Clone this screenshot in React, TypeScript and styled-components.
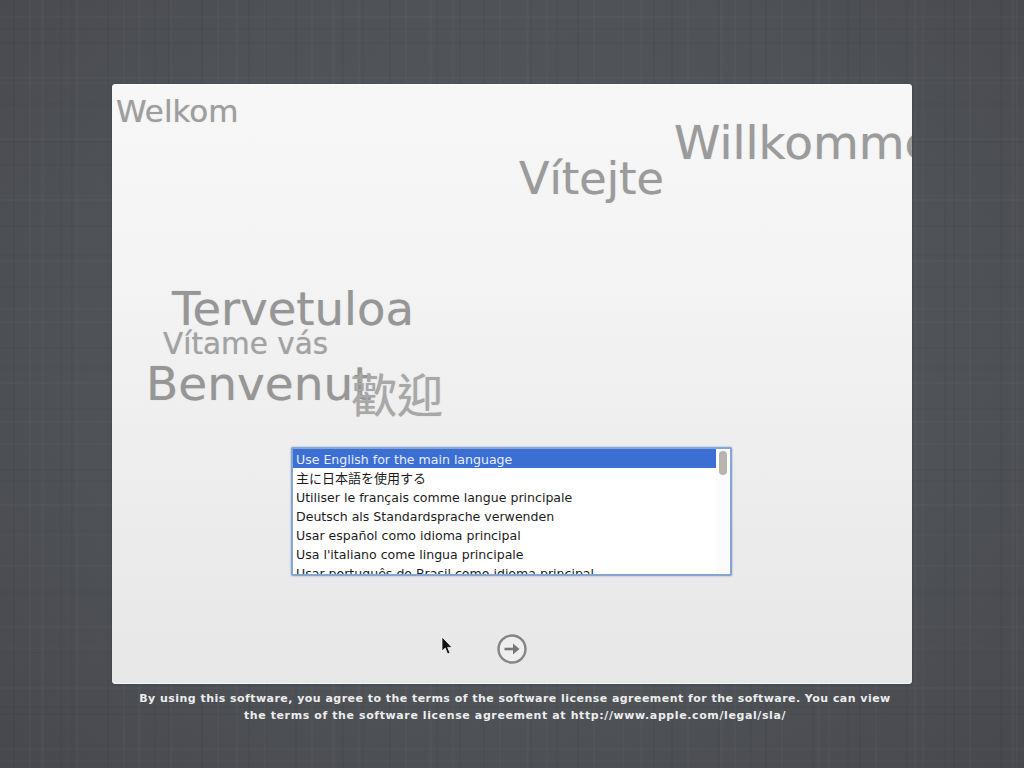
import React from "react";
import styled, { createGlobalStyle } from "styled-components";

const Global = createGlobalStyle`
  html, body { margin: 0; padding: 0; }
  body { background: #4d5054; font-family: "DejaVu Sans", "Noto Sans CJK TC", sans-serif; }
`;

const Desktop = styled.div`
  width: 1024px;
  height: 768px;
  overflow: hidden;
  box-sizing: border-box;
  padding-top: 84px;
  display: flex;
  flex-direction: column;
  align-items: center;
  background-color: #4f5256;
  background-image:
    linear-gradient(90deg, transparent 0 13px, rgba(0,0,0,0.035) 13px 15px, transparent 15px 29px, rgba(255,255,255,0.02) 29px 31px, transparent 31px),
    linear-gradient(90deg, transparent 0 41px, rgba(255,255,255,0.018) 41px 44px, transparent 44px 71px, rgba(0,0,0,0.03) 71px 73px, transparent 73px),
    linear-gradient(0deg, transparent 0 17px, rgba(0,0,0,0.025) 17px 19px, transparent 19px 43px, rgba(255,255,255,0.015) 43px 45px, transparent 45px),
    linear-gradient(0deg, transparent 0 29px, rgba(255,255,255,0.012) 29px 31px, transparent 31px 83px, rgba(0,0,0,0.025) 83px 85px, transparent 85px),
    radial-gradient(ellipse at 50% 45%, #54575b 0%, #4f5256 60%, #47484d 100%);
  background-size: 47px 100%, 97px 100%, 100% 61px, 100% 113px, 100% 100%;
`;

const Panel = styled.main`
  position: relative;
  width: 800px;
  height: 600px;
  flex: none;
  box-sizing: border-box;
  padding-top: 363px;
  border-radius: 4px;
  overflow: hidden;
  display: flex;
  flex-direction: column;
  align-items: center;
  background: linear-gradient(180deg, #f7f7f7 0%, #f4f4f4 30%, #eeeeee 60%, #e7e7e7 100%);
  box-shadow: 0 0 2px rgba(0, 0, 0, 0.3), inset 0 -1px 0 #f6f6f6, inset 0 1px 0 #ffffff;
`;

const Word = styled.span<{ $x: number; $y: number; $size: number; $tone?: string }>`
  position: absolute;
  left: ${(p) => p.$x}px;
  top: ${(p) => p.$y}px;
  font-size: ${(p) => p.$size}px;
  line-height: 1;
  white-space: nowrap;
  color: ${(p) => p.$tone ?? "#9a9a9a"};
  text-shadow: 0 0 1px rgba(150, 150, 150, 0.55);
`;

const ListBox = styled.div`
  position: relative;
  margin-left: -1px;
  width: 437px;
  height: 125px;
  flex: none;
  box-sizing: content-box;
  border: 2px solid #85a6d0;
  border-radius: 2px;
  background: #fff;
  overflow: hidden;
  display: flex;
  box-shadow: 0 0 2px rgba(70, 110, 170, 0.6);
`;

const Rows = styled.ul`
  flex: 1;
  margin: 0;
  padding: 0;
  list-style: none;
  min-width: 0;
`;

const Row = styled.li<{ $selected?: boolean; $cjk?: boolean }>`
  height: 19px;
  line-height: 21px;
  padding-left: 3px;
  font-size: ${(p) => (p.$cjk ? "13px" : "12.55px")};
  white-space: nowrap;
  color: ${(p) => (p.$selected ? "#e6edff" : "#1c1c1c")};
  background: ${(p) => (p.$selected ? "#3c6fd3" : "transparent")};
`;

const Track = styled.div`
  width: 14px;
  flex: none;
  background: #fbfbfb;
  box-sizing: border-box;
  padding: 2px 3px 0 3px;
`;

const Thumb = styled.div`
  width: 8px;
  height: 24px;
  border-radius: 4px;
  background: #b7b5ae;
`;

const NextRow = styled.div`
  margin-top: 58px;
  display: flex;
  justify-content: center;
  width: 100%;
`;

const NextButton = styled.button`
  width: 30px;
  height: 30px;
  padding: 0;
  border: none;
  background: none;
  display: block;
`;

const Pointer = styled.svg`
  position: absolute;
  left: 329px;
  top: 552px;
`;

const Legal = styled.p`
  margin: 6px 0 0;
  padding-left: 6px;
  width: 800px;
  box-sizing: border-box;
  text-align: center;
  font-size: 11px;
  line-height: 17px;
  font-weight: 700;
  color: #eceded;
`;

const LegalLine = styled.span<{ $spacing: number }>`
  display: block;
  letter-spacing: ${(p) => p.$spacing}px;
`;

const languages = [
  "Use English for the main language",
  "主に日本語を使用する",
  "Utiliser le français comme langue principale",
  "Deutsch als Standardsprache verwenden",
  "Usar español como idioma principal",
  "Usa l'italiano come lingua principale",
  "Usar português do Brasil como idioma principal",
];

export default function App() {
  return (
    <Desktop>
      <Global />
      <Panel>
        <Word $x={4} $y={12} $size={31} $tone="#9e9e9e">Welkom</Word>
        <Word $x={407} $y={73} $size={44.5} $tone="#9b9b9b">Vítejte</Word>
        <Word $x={562} $y={35} $size={47} $tone="#9b9b9b">Willkommen</Word>
        <Word $x={60} $y={202} $size={46.5} $tone="#969696">Tervetuloa</Word>
        <Word $x={51} $y={246} $size={29.5} $tone="#a2a2a2">Vítame vás</Word>
        <Word $x={34} $y={276} $size={47} $tone="#969696">Benvenut</Word>
        <Word $x={239} $y={289} $size={46} $tone="#a8a8a8">歡迎</Word>
        <ListBox>
          <Rows>
            {languages.map((l, i) => (
              <Row key={l} $selected={i === 0} $cjk={i === 1}>{l}</Row>
            ))}
          </Rows>
          <Track>
            <Thumb />
          </Track>
        </ListBox>
        <NextRow>
          <NextButton aria-label="Continue">
            <svg width="30" height="30" viewBox="0 0 30 30">
              <circle cx="15" cy="15" r="13.5" fill="#eeeeee" stroke="#858585" strokeWidth="2.4" />
              <path d="M7.5 15H19" stroke="#777" strokeWidth="2.6" fill="none" />
              <path d="M16 9.5 L22.5 15 L16 20.5 Z" fill="#777" />
            </svg>
          </NextButton>
        </NextRow>
        <Pointer width="14" height="20" viewBox="0 0 14 20">
          <path d="M1 1 V15 L4.2 12 L6.6 18 L9 17 L6.6 11.4 H11 Z" fill="#111" stroke="#fff" strokeWidth="0.7" />
        </Pointer>
      </Panel>
      <Legal>
        <LegalLine $spacing={0.46}>
          By using this software, you agree to the terms of the software license agreement for the software. You can view
        </LegalLine>
        <LegalLine $spacing={0.6}>
          the terms of the software license agreement at http://www.apple.com/legal/sla/
        </LegalLine>
      </Legal>
    </Desktop>
  );
}
